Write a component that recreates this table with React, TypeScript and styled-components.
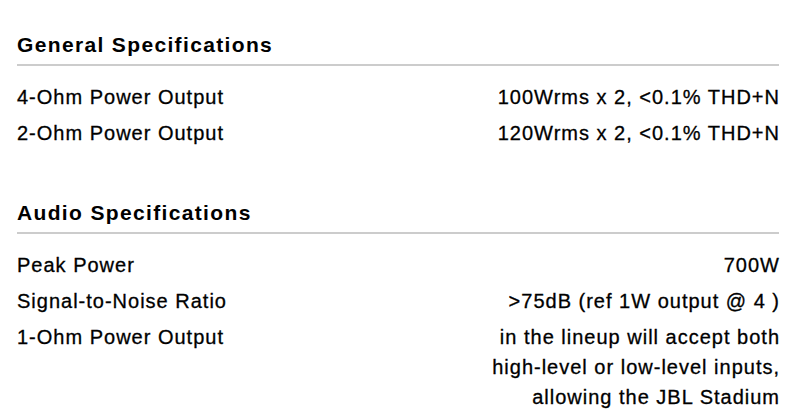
import styled, { createGlobalStyle } from 'styled-components';

const GlobalStyle = createGlobalStyle`
  body {
    margin: 0;
    background: #fff;
    font-family: "Liberation Sans", Arial, sans-serif;
    color: #000;
  }
`;

const Page = styled.div`
  padding: 33px 18px 0 17px;
  display: flex;
  flex-direction: column;
  gap: 53px;
`;

const Section = styled.section`
  display: flex;
  flex-direction: column;
`;

const Heading = styled.h2`
  margin: 0;
  font-size: 21px;
  line-height: 24px;
  font-weight: 700;
  letter-spacing: 1.35px;
  padding-bottom: 7px;
  border-bottom: 2px solid #cccccc;
`;

const List = styled.dl`
  margin: 16px 0 0;
  display: flex;
  flex-direction: column;
  gap: 6px;
`;

const Row = styled.div`
  display: flex;
  justify-content: space-between;
  align-items: flex-start;
  font-size: 20px;
  line-height: 30px;
  letter-spacing: 1px;
  -webkit-text-stroke: 0.3px #000;
`;

const Label = styled.dt`
  margin: 0;
`;

const Value = styled.dd`
  margin: 0;
  max-width: 294px;
  text-align: right;
  margin-right: -1px;
`;

interface Spec {
  label: string;
  value: string;
}

const general: Spec[] = [
  { label: '4-Ohm Power Output', value: '100Wrms x 2, <0.1% THD+N' },
  { label: '2-Ohm Power Output', value: '120Wrms x 2, <0.1% THD+N' },
];

const audio: Spec[] = [
  { label: 'Peak Power', value: '700W' },
  { label: 'Signal-to-Noise Ratio', value: '>75dB (ref 1W output @ 4 )' },
  {
    label: '1-Ohm Power Output',
    value: 'in the lineup will accept both high-level or low-level inputs, allowing the JBL Stadium',
  },
];

const SpecSection = ({ title, specs }: { title: string; specs: Spec[] }) => (
  <Section>
    <Heading>{title}</Heading>
    <List>
      {specs.map(s => (
        <Row key={s.label}>
          <Label>{s.label}</Label>
          <Value>{s.value}</Value>
        </Row>
      ))}
    </List>
  </Section>
);

export default function App() {
  return (
    <>
      <GlobalStyle />
      <Page>
        <SpecSection title="General Specifications" specs={general} />
        <SpecSection title="Audio Specifications" specs={audio} />
      </Page>
    </>
  );
}
